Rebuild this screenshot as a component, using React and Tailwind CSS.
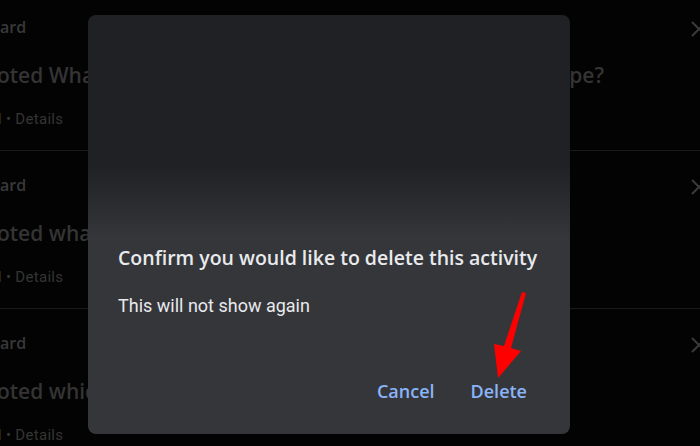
import React from 'react';

const rows = [
  { source: 'ard', title: 'oted What do you think of the new Google Maps app shape?', meta: 'l • Details' },
  { source: 'ard', title: 'oted what is your favorite', meta: 'l • Details' },
  { source: 'ard', title: 'oted which one is better', meta: 'l • Details' },
];

const CloseIcon = () => (
  <svg width="18" height="18" viewBox="0 0 18 18" className="shrink-0">
    <path d="M2 2 L16 16 M16 2 L2 16" stroke="#3a3a3a" strokeWidth="2" />
  </svg>
);

const ActivityRow = ({ row }) => (
  <div className="flex h-[158px] items-start border-b border-[#1a1a1a]">
    <div className="flex min-w-0 flex-col pt-[22px]" style={{ fontFamily: '"Open Sans", sans-serif' }}>
      <div className="text-[16px] font-semibold leading-[24px] text-[#393939] whitespace-nowrap">{row.source}</div>
      <div className="ml-[-3px] mt-[22px] text-[21px] font-semibold leading-[28px] text-[#343434] whitespace-nowrap">
        {row.title}
      </div>
      <div
        className="ml-[-2px] mt-[20px] text-[15px] leading-[20px] text-[#353535] whitespace-nowrap tracking-[0.3px]"
        style={{ fontFamily: 'Roboto, sans-serif' }}
      >
        {row.meta}
      </div>
    </div>
    <div className="ml-auto mr-[-8px] mt-[27px] shrink-0">
      <CloseIcon />
    </div>
  </div>
);

export default function App() {
  return (
    <div className="relative h-[446px] w-[700px] overflow-hidden bg-[#030303]">
      <div className="mt-[-7px] flex flex-col">
        {rows.map((row, i) => (
          <ActivityRow key={i} row={row} />
        ))}
      </div>

      <div className="absolute left-[88px] top-[15px] flex h-[419px] w-[482px] flex-col rounded-[8px] bg-[linear-gradient(to_bottom,#202124_0%,#202124_36%,#35363a_53%,#35363a_100%)] px-[30px]">
        <h2
          className="mt-[230px] text-[19.5px] font-semibold leading-[26px] text-[#e8eaed] whitespace-nowrap"
          style={{ fontFamily: '"Open Sans", sans-serif' }}
        >
          Confirm you would like to delete this activity
        </h2>
        <p className="mt-[22px] text-[18px] leading-[26px] text-[#e8eaed]" style={{ fontFamily: 'Roboto, sans-serif' }}>
          This will not show again
        </p>
        <div
          className="mt-auto mb-[30px] flex justify-end gap-[36px] pr-[13px]"
          style={{ fontFamily: '"Open Sans", sans-serif' }}
        >
          <button className="text-[18px] font-semibold leading-[26px] text-[#8ab4f8]">Cancel</button>
          <button className="text-[18px] font-semibold leading-[26px] text-[#8ab4f8]">Delete</button>
        </div>
      </div>

      <svg className="pointer-events-none absolute left-0 top-0" width="700" height="446">
        <polygon points="522,292 526,293 511,348 521,351 498,378 494,344 504,346" fill="#ff0000" />
      </svg>
    </div>
  );
}
